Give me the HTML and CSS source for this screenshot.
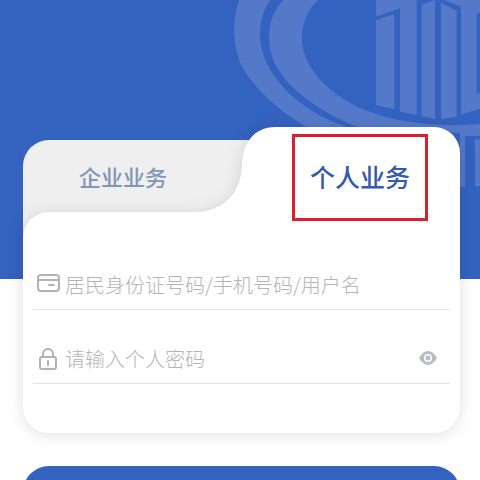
FILE: index.html
```html
<!DOCTYPE html>
<html lang="zh-CN">
<head>
    <meta charset="UTF-8">
    <meta name="viewport" content="width=device-width, initial-scale=1">
    <title>个人业务</title>
    <link rel="stylesheet" href="styles.css">
</head>
<body>
    <div class="hero">
        <svg class="emblem" viewBox="0 0 780 600" aria-hidden="true">
            <path d="M58 0C38 50 36 120 58 180C86 256 180 335 265 385H392C270 345 185 275 146 200C110 130 112 60 150 0Z"/>
            <path d="M190 0C140 50 134 135 172 204C215 280 340 365 470 400H720V560H735V408H780V372C700 380 560 376 450 336C350 300 268 225 250 150C238 95 252 40 294 0Z"/>
            <path d="M468 60L523 42V328L468 315Z"/>
            <path d="M468 0H590V345L540 335V25L468 50Z"/>
            <path d="M605 14L645 0V358L605 348Z"/>
            <path d="M663 8L710 32V350L663 358Z"/>
            <path d="M672 0H780V40H770V280H780V326L723 344V20Z"/>
            <path d="M765 418H780V558H765Z"/>
        </svg>
    </div>
    <main class="login">
        <div class="card">
            <div class="shape">
                <div class="shape-top">
                    <svg class="curve" viewBox="0 0 90 86" aria-hidden="true">
                        <path d="M90 0H86C62 0 53 18 52 38C51 66 34 85 4 85H0V86H90Z"/>
                    </svg>
                    <div class="shape-tab"></div>
                </div>
                <div class="shape-body"></div>
            </div>
            <div class="tabs">
                <button type="button" class="tab">企业业务</button>
                <button type="button" class="tab active">个人业务<span class="mark"></span></button>
            </div>
            <form class="form" id="login">
                <div class="row">
                    <label for="user">
                        <svg class="icon" viewBox="0 0 24 24" aria-hidden="true">
                            <rect x="2" y="3" width="21" height="16" rx="3"/>
                            <path d="M2 8H23M13 13H18"/>
                        </svg>
                    </label>
                    <input type="text" id="user" placeholder="居民身份证号码/手机号码/用户名">
                </div>
                <div class="row">
                    <label for="pwd">
                        <svg class="icon" viewBox="0 0 24 24" aria-hidden="true">
                            <rect x="4" y="11" width="16" height="12" rx="2"/>
                            <path d="M7 11V8A5 5 0 0 1 17 8V11M12 15V19"/>
                        </svg>
                    </label>
                    <input type="password" id="pwd" placeholder="请输入个人密码">
                    <button type="button" class="eye" aria-label="显示密码">
                        <svg viewBox="0 0 20 16" aria-hidden="true">
                            <path class="lid" d="M1 8Q5 1 10 1T19 8Q15 15 10 15T1 8Z"/>
                            <circle class="ring" cx="10" cy="8" r="4"/>
                            <circle class="pupil" cx="10" cy="8" r="2.500"/>
                        </svg>
                    </button>
                </div>
            </form>
        </div>
        <button type="submit" form="login" class="submit" aria-label="登录"></button>
    </main>
</body>
</html>
```
FILE: styles.css
```css
*{box-sizing: border-box;}
html,body{
    height: 100%;
    margin: 0;
}
body{
    overflow-x: hidden;
    background: #fff;
    font-family: "Noto Sans CJK SC", sans-serif;
}
button,input{
    padding: 0;
    border: 0;
    background: none;
    font-family: inherit;
}
button{cursor: pointer;}
.hero{
    position: relative;
    height: 279px;
    background: #3462c0;
}
.emblem{
    position: absolute;
    top: 0;
    right: 0;
    width: 260px;
    height: 200px;
    fill: #5379c8;
}
.login{
    position: relative;
    margin-top: -152px;
    padding: 0 20px 0 23px;
}
.card{
    position: relative;
}
/* grey plate of the inactive tab */
.card::before{
    content: "";
    position: absolute;
    top: 13px;
    left: 0;
    width: 60%;
    height: 120px;
    border-radius: 26px 0 0 0;
    background: #efefef;
}
/* white outline: raised tab + body, one shadow for both */
.shape{
    position: absolute;
    top: 0;
    right: 0;
    bottom: 0;
    left: 0;
    display: flex;
    flex-direction: column;
    filter: drop-shadow(0 2px 8px rgba(0,0,0,.12));
}
.shape-top{
    display: flex;
    height: 85px;
    padding-left: calc(50% - 52px);
}
.curve{
    flex: none;
    width: 90px;
    height: 86px;
    fill: #fff;
}
.shape-tab{
    flex: 1;
    height: 86px;
    margin-left: -1px;
    border-radius: 0 26px 0 0;
    background: #fff;
}
.shape-body{
    flex: 1;
    border-radius: 26px 0 26px 26px;
    background: #fff;
}
.tabs{
    position: relative;
    display: flex;
    gap: 37px;
    height: 85px;
}
.tab{
    position: relative;
    flex: 1;
    padding-top: 12px;
    color: #8294b8;
    font-size: 22px;
    font-weight: 500;
    line-height: 32px;
}
.tab.active{
    color: #3459ae;
    font-size: 25px;
}
.mark{
    position: absolute;
    top: 7px;
    left: 32px;
    right: 32px;
    height: 87px;
    border: 3px solid #d8202c;
}
.form{
    position: relative;
    padding: 24px 10px 49px;
}
.row{
    display: flex;
    align-items: flex-end;
    height: 74px;
    padding: 0 12px 10px 3px;
    border-bottom: 1px solid #e4e4e4;
}
.row label{
    display: flex;
    align-items: center;
    height: 30px;
    margin-right: 5px;
}
.icon{
    width: 24px;
    height: 24px;
    fill: none;
    stroke: #b2b2b2;
    stroke-width: 2;
    stroke-linecap: round;
}
.row input{
    flex: 1;
    min-width: 0;
    height: 30px;
    outline: 0;
    color: #333;
    font-size: 20px;
    font-weight: 300;
}
.row input::placeholder{
    color: #b4b4b4;
    opacity: 1;
}
.eye{
    display: flex;
    align-items: center;
    height: 30px;
}
.eye svg{
    width: 20px;
    height: 16px;
}
.eye .lid{fill: #b9bcc2;}
.eye .ring{fill: #fff;}
.eye .pupil{fill: #b9bcc2;}
.submit{
    display: block;
    width: 100%;
    height: 56px;
    margin-top: 33px;
    border-radius: 26px;
    background: #3462c0;
}
```
